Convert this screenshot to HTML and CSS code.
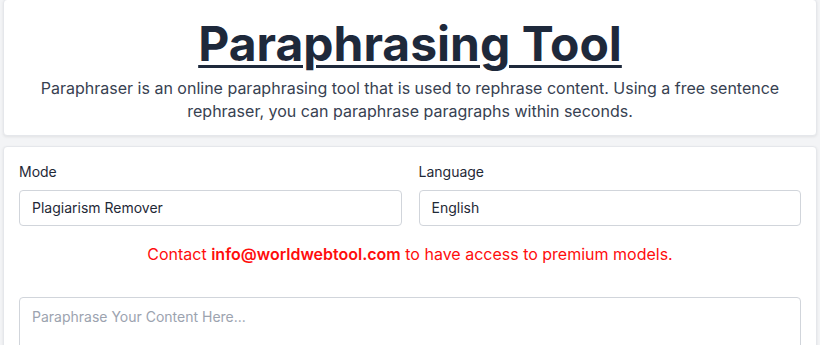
FILE: index.html
```html
<!DOCTYPE html>
<html lang="en">
<head>
    <meta charset="UTF-8">
    <meta name="viewport" content="width=device-width, initial-scale=1.0">
    <title>Paraphrasing Tool</title>
    <link rel="stylesheet" href="styles.css">
</head>
<body>
    <div class="card header-card">
        <h1><a href="#">Paraphrasing Tool</a></h1>
        <p>Paraphraser is an online paraphrasing tool that is used to rephrase content. Using a free sentence rephraser, you can paraphrase paragraphs within seconds.</p>
    </div>

    <div class="card tool-card">
        <div class="row">
            <div class="field">
                <label for="mode">Mode</label>
                <div class="select-box" id="mode">Plagiarism Remover</div>
            </div>
            <div class="field">
                <label for="language">Language</label>
                <div class="select-box" id="language">English</div>
            </div>
        </div>

        <p class="notice">Contact <b>info@worldwebtool.com</b> to have access to premium models.</p>

        <textarea class="content" placeholder="Paraphrase Your Content Here..."></textarea>
    </div>
</body>
</html>
```

FILE: styles.css
```css
body { margin: 0; padding: 0 3px; background-color: #f3f4f6; font-family: Inter, "Noto Sans", sans-serif; color: #1f2937; }
.card {
    background: #fff;
    border: 1px solid #e5e7eb;
    border-radius: 4px;
    box-shadow: 0 1px 3px rgba(0, 0, 0, 0.08);
}
.header-card { text-align: center; padding: 12px 16px 12px; margin-top: -1px; }
.header-card h1 { margin: 0; font-size: 48px; line-height: 64px; font-weight: 700; }
.header-card h1 a { color: #1e293b; text-decoration: underline; text-decoration-thickness: 3px; text-underline-offset: 4px; }
.header-card p { margin: 1px 0 0; font-size: 16px; line-height: 23px; color: #374151; }
.tool-card { margin-top: 10px; padding: 15px 15px 16px; }
.row { display: flex; gap: 17px; }
.field { flex: 1; display: flex; flex-direction: column; }
.field label { font-size: 14px; line-height: 20px; font-weight: 400; color: #1f2937; margin-bottom: 8px; }
.select-box {
    height: 34px;
    line-height: 34px;
    padding: 0 12px;
    border: 1px solid #d1d5db;
    border-radius: 4px;
    font-size: 14px;
    color: #1f2937;
}
.notice { text-align: center; color: #ff0d0d; font-size: 16px; margin: 18px 0 33px; line-height: 20px; }
.notice b { font-weight: 600; }
.content {
    display: block;
    box-sizing: border-box;
    width: 100%;
    height: 160px;
    padding: 10px 12px;
    border: 1px solid #d1d5db;
    border-radius: 4px;
    font-family: Inter, "Noto Sans", sans-serif;
    font-size: 14px;
    resize: none;
}
.content::placeholder { color: #9ca3af; }
```
